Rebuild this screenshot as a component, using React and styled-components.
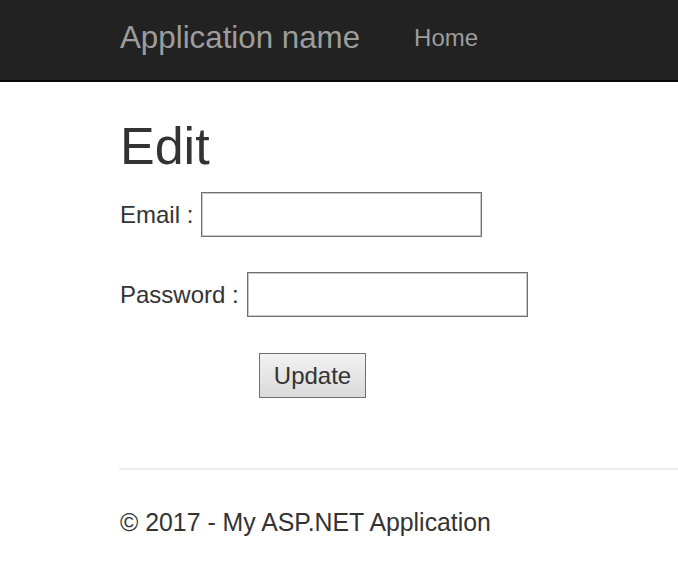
import React from "react";
import styled, { createGlobalStyle } from "styled-components";

const GlobalStyle = createGlobalStyle`
  body {
    margin: 0;
    background: #fff;
    font-family: "Liberation Sans", Arial, sans-serif;
    color: #333;
  }
`;

const Navbar = styled.nav`
  height: 82px;
  box-sizing: border-box;
  padding: 0 0 4px 120px;
  display: flex;
  align-items: center;
  gap: 54px;
  background: #222;
  border-bottom: 2px solid #080808;
`;

const Brand = styled.a`
  color: #9d9d9d;
  font-size: 31.3px;
  line-height: 34px;
  text-decoration: none;
`;

const NavLink = styled.a`
  color: #9d9d9d;
  font-size: 24px;
  line-height: 30px;
  text-decoration: none;
`;

const Body = styled.main`
  padding-left: 120px;
`;

const Title = styled.h2`
  margin: 36px 0 17px;
  font-size: 52px;
  line-height: 57px;
  font-weight: 400;
`;

const Form = styled.form`
  display: flex;
  flex-direction: column;
  align-items: flex-start;
  gap: 35px;
`;

const Row = styled.div`
  display: flex;
  align-items: center;
  gap: 8px;
  font-size: 24px;
  line-height: 34px;
`;

const Input = styled.input`
  width: 281px;
  height: 45px;
  box-sizing: border-box;
  margin: 0;
  border: 1px solid #707070;
  box-shadow: inset 0 0 0 1px #c9c9c9;
  background: #fff;
  font: inherit;
`;

const Submit = styled.button`
  margin: 1px 0 0 139px;
  width: 107px;
  height: 45px;
  box-sizing: border-box;
  border: 1px solid #707070;
  background: linear-gradient(#f2f2f2, #dadada);
  color: #333;
  font-family: "Liberation Sans", Arial, sans-serif;
  font-size: 24px;
  padding: 0;
`;

const Rule = styled.hr`
  margin: 70px 0 0 -1px;
  border: 0;
  border-top: 2px solid #eee;
`;

const Footer = styled.footer`
  margin: 36px 0 0;
  font-size: 24.85px;
  line-height: 34px;
`;

export default function App() {
  return (
    <>
      <GlobalStyle />
      <Navbar>
        <Brand href="#">Application name</Brand>
        <NavLink href="#">Home</NavLink>
      </Navbar>
      <Body>
        <Title>Edit</Title>
        <Form onSubmit={(e) => e.preventDefault()}>
          <Row>
            <span>Email :</span>
            <Input type="email" />
          </Row>
          <Row>
            <span>Password :</span>
            <Input type="password" />
          </Row>
          <Submit type="submit">Update</Submit>
        </Form>
        <Rule />
        <Footer>© 2017 - My ASP.NET Application</Footer>
      </Body>
    </>
  );
}
